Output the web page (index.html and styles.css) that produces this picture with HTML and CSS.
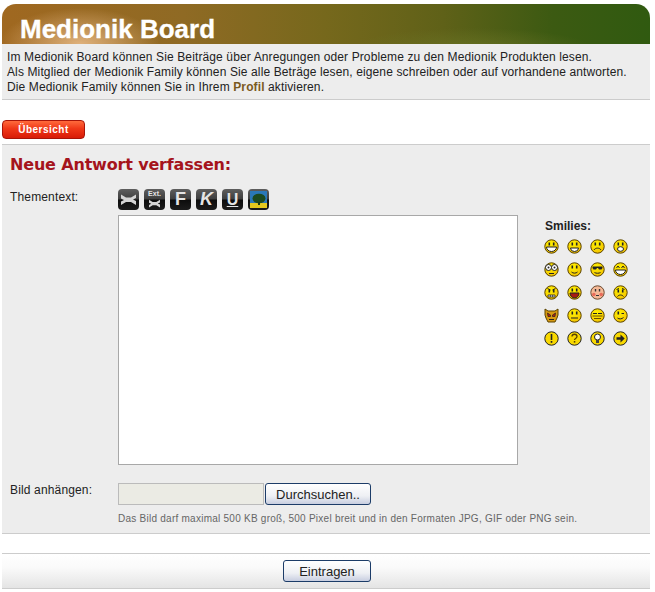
FILE: index.html
```html
<!DOCTYPE html>
<html>
<head>
	<meta name="viewport" content="width=device-width, initial-scale=1.0">
	<link rel="stylesheet" href="styles.css">
	<title>Medionik Board</title>
</head>
<body>
	<svg class="defs" width="0" height="0">
		<defs>
			<radialGradient id="yellow" cx="40%" cy="30%" r="70%">
				<stop offset="0" stop-color="#fff200"/>
				<stop offset="1" stop-color="#f4c400"/>
			</radialGradient>
			<symbol id="face" viewBox="0 0 15 15">
				<circle cx="7.5" cy="7.5" r="6.7" fill="url(#yellow)" stroke="#5a4300"/>
			</symbol>
			<symbol id="eyes" viewBox="0 0 15 15">
				<rect x="4.5" y="3.5" width="1.6" height="3" fill="#222"/>
				<rect x="8.9" y="3.5" width="1.6" height="3" fill="#222"/>
			</symbol>
			<symbol id="tool" viewBox="0 0 21 15">
				<path d="M3 2.500l5 3h5l5-3v3.500l-3 1.500 3 1.500V13l-5-3H8l-5 3V9.500l3-1.500-3-1.500z" fill="#d4d4d4"/>
			</symbol>
		</defs>
	</svg>

	<div class="page">
		<div class="banner">Medionik Board</div>
		<div class="intro">
			<p>Im Medionik Board können Sie Beiträge über Anregungen oder Probleme zu den Medionik Produkten lesen.</p>
			<p>Als Mitglied der Medionik Family können Sie alle Beträge lesen, eigene schreiben oder auf vorhandene antworten.</p>
			<p>Die Medionik Family können Sie in Ihrem <a href="#">Profil</a> aktivieren.</p>
		</div>

		<a class="btn-red" href="#">Übersicht</a>

		<div class="panel">
			<h1>Neue Antwort verfassen:</h1>

			<div class="row">
				<label class="lbl">Thementext:</label>
				<div class="editor">
					<div class="tools">
						<span class="tool"><svg width="21" height="15"><use href="#tool" width="21" height="15"/></svg></span>
						<span class="tool tool-ext"><small>Ext.</small><svg width="21" height="11" viewBox="0 0 21 15"><use href="#tool" width="21" height="15"/></svg></span>
						<span class="tool">F</span>
						<span class="tool tool-k">K</span>
						<span class="tool tool-u">U</span>
						<span class="tool">
							<svg width="17" height="17" viewBox="0 0 17 17">
								<rect width="17" height="17" fill="#2a78b8"/>
								<rect y="12" width="17" height="5" fill="#e4c81e"/>
								<ellipse cx="9" cy="7.5" rx="6.5" ry="4.8" fill="#1c4a20"/>
								<rect x="8" y="11" width="2" height="3" fill="#1c3a14"/>
							</svg>
						</span>
					</div>
					<div class="write">
						<textarea></textarea>
						<div class="smilies">
							<b>Smilies:</b>
							<div class="smiley-grid">
								<svg viewBox="0 0 15 15"><use href="#face"/><use href="#eyes"/><path d="M2.5 8h10a5 4.5 0 0 1-10 0z" fill="#fff" stroke="#222"/></svg>
								<svg viewBox="0 0 15 15"><use href="#face"/><use href="#eyes"/><path d="M3.5 9h8a4 3.5 0 0 1-8 0z" fill="#fff" stroke="#222"/></svg>
								<svg viewBox="0 0 15 15"><use href="#face"/><use href="#eyes"/><path d="M4 11c1.5-2.5 5.500-2.500 7 0" fill="none" stroke="#222"/></svg>
								<svg viewBox="0 0 15 15"><use href="#face"/><use href="#eyes"/><ellipse cx="7.500" cy="10" rx="3" ry="2.300" fill="#fff" stroke="#222"/></svg>
								<svg viewBox="0 0 15 15"><use href="#face"/><circle cx="4.500" cy="5.500" r="3" fill="#fff" stroke="#222"/><circle cx="10.500" cy="5.500" r="3" fill="#fff" stroke="#222"/><circle cx="4.500" cy="5.500" r="1" fill="#222"/><circle cx="10.500" cy="5.500" r="1" fill="#222"/><path d="M5 11.500h5" stroke="#222"/></svg>
								<svg viewBox="0 0 15 15"><use href="#face"/><use href="#eyes"/><path d="M4.500 10c1.500 1.500 4.500 1.500 6 0" fill="none" stroke="#222"/></svg>
								<svg viewBox="0 0 15 15"><use href="#face"/><path d="M2.500 4.500h10v1.500l-1 1.500h-2.500l-1-1.500h-1l-1 1.500H3.500l-1-1.500z" fill="#222"/><path d="M4.500 10.500c1.500 1 4.500 1 6 0" fill="none" stroke="#222"/></svg>
								<svg viewBox="0 0 15 15"><use href="#face"/><path d="M3.500 6l1.500-2 1.500 2M8.500 6l1.500-2 1.500 2" fill="none" stroke="#222"/><path d="M2.500 8h10a5 4.500 0 0 1-10 0z" fill="#fff" stroke="#222"/></svg>
								<svg viewBox="0 0 15 15"><use href="#face"/><path d="M3.500 3.500l3 1.500M11.500 3.500l-3 1.500" stroke="#222"/><use href="#eyes" y="1"/><path d="M4 10h7v2H4zM6.300 10v2M8.700 10v2" fill="#fff" stroke="#222" stroke-width=".8"/></svg>
								<svg viewBox="0 0 15 15"><use href="#face"/><use href="#eyes"/><path d="M3 8h9a4.500 5 0 0 1-9 0z" fill="#a81c10" stroke="#222"/></svg>
								<svg viewBox="0 0 15 15"><circle cx="7.500" cy="7.500" r="6.700" fill="#f4b896" stroke="#6a4a30"/><circle cx="3.800" cy="9.500" r="1.800" fill="#e86a5a"/><circle cx="11.200" cy="9.500" r="1.800" fill="#e86a5a"/><rect x="4.800" y="4" width="1.400" height="2.500" fill="#333"/><rect x="8.800" y="4" width="1.400" height="2.500" fill="#333"/><path d="M6 10.500h3" stroke="#333"/></svg>
								<svg viewBox="0 0 15 15"><use href="#face"/><path d="M3.500 4.500l2.500-1M11.500 4.500l-2.500-1" stroke="#222"/><use href="#eyes" y="1"/><path d="M4.500 11.500c1.500-2 4.500-2 6 0" fill="none" stroke="#222"/></svg>
								<svg viewBox="0 0 15 15"><path d="M1 1l3 2h7l3-2v6l-1 3-2 4H4l-2-4-1-3z" fill="#d89a10" stroke="#5a4300"/><path d="M3.500 5l3 2v1.500h-2.500zM11.500 5l-3 2v1.500H11z" fill="#b81c10" stroke="#222" stroke-width=".7"/><path d="M5 11.500h5" stroke="#222"/></svg>
								<svg viewBox="0 0 15 15"><use href="#face"/><use href="#eyes"/><path d="M4 10h7" stroke="#222"/></svg>
								<svg viewBox="0 0 15 15"><use href="#face"/><path d="M3 5.500h4M8 5.500h4" stroke="#222"/><path d="M2.500 8h10M4 10.500h7" stroke="#6a5000"/></svg>
								<svg viewBox="0 0 15 15"><use href="#face"/><rect x="4.500" y="3.500" width="1.600" height="3" fill="#222"/><path d="M8.500 5.500h2.500" stroke="#222"/><path d="M4.500 10c1.500 1.500 4.500 1 6-.5" fill="none" stroke="#222"/></svg>
								<svg viewBox="0 0 15 15"><circle cx="7.500" cy="7.500" r="6.700" fill="#f8d800" stroke="#222"/><rect x="6.700" y="3" width="1.600" height="6" fill="#222"/><rect x="6.700" y="10" width="1.600" height="1.800" fill="#222"/></svg>
								<svg viewBox="0 0 15 15"><circle cx="7.500" cy="7.500" r="6.700" fill="#f8d800" stroke="#222"/><path d="M5 5.500c0-3 5-3 5 0 0 2-2.500 2-2.500 3.500" fill="none" stroke="#5a4300" stroke-width="1.300"/><rect x="6.800" y="10" width="1.500" height="1.600" fill="#5a4300"/></svg>
								<svg viewBox="0 0 15 15"><circle cx="7.500" cy="7.500" r="6.700" fill="#f8d800" stroke="#222"/><circle cx="7.500" cy="6" r="3" fill="#fff" stroke="#222"/><rect x="6" y="9" width="3" height="3" fill="#444"/></svg>
								<svg viewBox="0 0 15 15"><circle cx="7.500" cy="7.500" r="6.700" fill="#f8d800" stroke="#222"/><path d="M3.500 6.300h4V3.500l4.200 4-4.200 4V8.700h-4z" fill="#222"/></svg>
							</div>
						</div>
					</div>
				</div>
			</div>

			<div class="row row-file">
				<label class="lbl">Bild anhängen:</label>
				<div class="upload">
					<div class="file">
						<input type="text" disabled>
						<button class="btn">Durchsuchen..</button>
					</div>
					<p class="hint">Das Bild darf maximal 500 KB groß, 500 Pixel breit und in den Formaten JPG, GIF oder PNG sein.</p>
				</div>
			</div>
		</div>

		<div class="footer">
			<button class="btn btn-send">Eintragen</button>
		</div>
	</div>
</body>
</html>
```

FILE: styles.css
```css
*{
	margin: 0;
	padding: 0;
	box-sizing: border-box;
}
body{
	background-color: #fff;
	font-family: "Liberation Sans", Arial, sans-serif;
	font-size: 12px;
	color: #222;
}
.defs{
	display: block;
}
.page{
	width: 648px;
	margin: 4px 0 0 2px;
}
.banner{
	height: 40px;
	padding: 10px 0 0 18px;
	border-radius: 14px 14px 0 0;
	background:
		radial-gradient(ellipse 80px 36px at 78px 40px, rgba(236,190,140,.85), rgba(236,190,140,0)),
		radial-gradient(ellipse 120px 20px at 470px 44px, rgba(110,120,40,.6), rgba(110,120,40,0)),
		linear-gradient(90deg, #a06820 0%, #8f6a24 28%, #76681c 50%, #5f6118 68%, #3c5a12 85%, #305a10 100%);
	color: #fff;
	font-size: 26px;
	line-height: 30px;
	font-weight: bold;
	-webkit-text-stroke: .3px #fff;
}
.intro{
	height: 56px;
	padding: 6px 5px 0;
	background: #ededed;
	border-bottom: 1px solid #ccc;
	line-height: 15px;
	letter-spacing: .12px;
}
.intro a{
	color: #7a5a1e;
	font-weight: bold;
	text-decoration: none;
}
.btn-red{
	display: block;
	width: 83px;
	height: 19px;
	margin: 20px 0 5px;
	border: 1px solid #a81408;
	border-radius: 4px;
	background: linear-gradient(#ff6a3c 0%, #f03818 45%, #d81c08 100%);
	color: #fff;
	text-align: center;
	font-size: 10px;
	line-height: 17px;
	font-weight: bold;
	letter-spacing: .5px;
	text-decoration: none;
}
.panel{
	height: 390px;
	padding: 10px 0 0 8px;
	background: #ededed;
	border-top: 1px solid #ccc;
	border-bottom: 1px solid #ccc;
}
.panel h1{
	font-family: "DejaVu Sans", Verdana, sans-serif;
	font-size: 16px;
	line-height: 20px;
	font-weight: bold;
	letter-spacing: -.17px;
	color: #a5141c;
}
.row{
	display: flex;
	margin-top: 14px;
}
.lbl{
	width: 108px;
	flex: none;
	line-height: 15px;
	padding-top: 1px;
	letter-spacing: .15px;
}
.tools{
	display: flex;
	gap: 5px;
	height: 21px;
}
.tool{
	width: 21px;
	height: 21px;
	display: flex;
	flex-direction: column;
	align-items: center;
	justify-content: center;
	border-radius: 4px;
	background: linear-gradient(#5e5e5e 0%, #3e3e3e 48%, #0c0c0c 52%, #1c1c1c 100%);
	color: #e4e4e4;
	font-size: 18px;
	line-height: 21px;
	font-weight: bold;
	overflow: hidden;
}
.tool-ext small{
	font-size: 7px;
	line-height: 8px;
}
.tool-k{
	font-style: italic;
}
.tool-u{
	text-decoration: underline;
	font-size: 16px;
}
.write{
	display: flex;
	margin-top: 5px;
}
textarea{
	display: block;
	width: 400px;
	height: 250px;
	background: #fff;
	border: 1px solid #a8a8a8;
	resize: none;
}
.smilies{
	margin: 4px 0 0 27px;
}
.smilies b{
	display: block;
	line-height: 14px;
	color: #222;
}
.smiley-grid{
	display: grid;
	grid-template-columns: repeat(4, 15px);
	grid-auto-rows: 15px;
	gap: 8px;
	margin: 6px 0 0 -1px;
}
.smiley-grid svg{
	width: 15px;
	height: 15px;
}
.row-file{
	margin-top: 18px;
}
.row-file .lbl{
	padding-top: 0;
}
.file{
	display: flex;
	gap: 1px;
}
.file input{
	width: 146px;
	height: 22px;
	background: #ebebe4;
	border: 1px solid #bbb;
}
.btn{
	height: 22px;
	padding: 0 6px;
	border: 1px solid #1c3c68;
	border-radius: 3px;
	background: linear-gradient(#fff 0%, #eef0f4 60%, #c8cee0 100%);
	color: #222;
	font-family: "Liberation Sans", Arial, sans-serif;
	font-size: 13px;
}
.file .btn{
	width: 106px;
}
.hint{
	margin-top: 7px;
	font-size: 10px;
	line-height: 13px;
	letter-spacing: .25px;
	color: #666;
}
.footer{
	height: 36px;
	margin-top: 19px;
	padding: 6px 0 0 2px;
	text-align: center;
	background: linear-gradient(#fff 0%, #fafafa 40%, #e4e4e4 100%);
	border-top: 1px solid #ccc;
	border-bottom: 1px solid #ccc;
}
.btn-send{
	width: 88px;
}
```
